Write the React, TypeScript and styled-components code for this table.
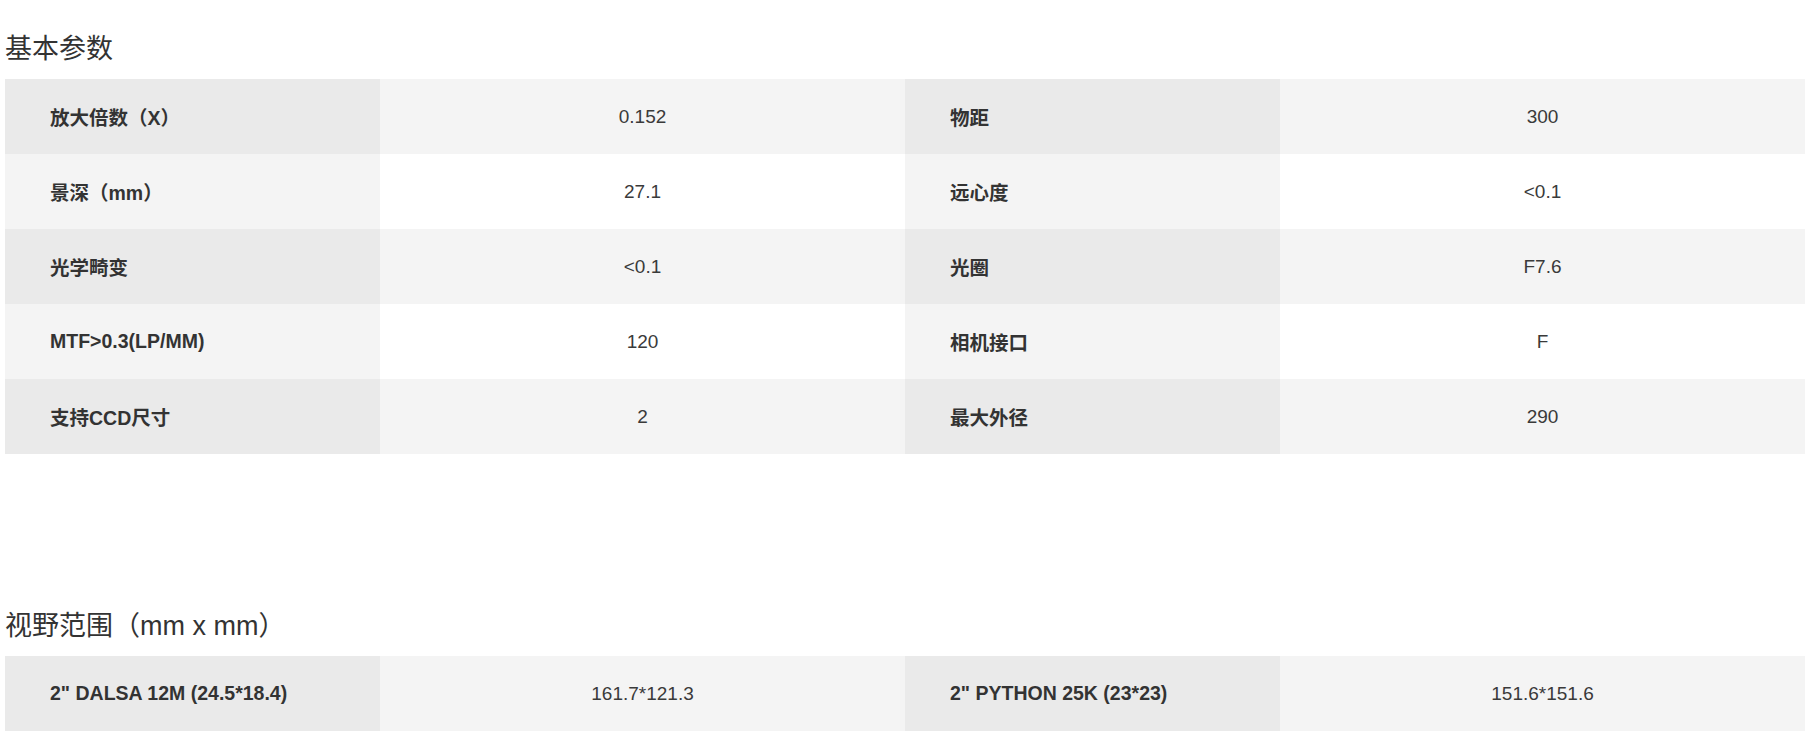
import styled, { createGlobalStyle } from "styled-components";

const GlobalStyle = createGlobalStyle`
  html, body {
    margin: 0;
    padding: 0;
    background: #fff;
  }
  body {
    font-family: "Liberation Sans", Arial, "Noto Sans CJK SC", sans-serif;
    color: #333;
  }
`;

type Spec = [string, string, string, string];

const basicSpecs: Spec[] = [
  ["放大倍数（X）", "0.152", "物距", "300"],
  ["景深（mm）", "27.1", "远心度", "<0.1"],
  ["光学畸变", "<0.1", "光圈", "F7.6"],
  ["MTF>0.3(LP/MM)", "120", "相机接口", "F"],
  ["支持CCD尺寸", "2", "最大外径", "290"],
];

const fovSpecs: Spec[] = [
  ['2" DALSA 12M (24.5*18.4)', "161.7*121.3", '2" PYTHON 25K (23*23)', "151.6*151.6"],
];

function SpecTable({ rows }: { rows: Spec[] }) {
  return (
    <Table>
      {rows.map((row, i) => (
        <Row key={i} $alt={i % 2 === 1}>
          <LabelCell>{row[0]}</LabelCell>
          <ValueCell>{row[1]}</ValueCell>
          <LabelCell>{row[2]}</LabelCell>
          <ValueCell>{row[3]}</ValueCell>
        </Row>
      ))}
    </Table>
  );
}

export default function App() {
  return (
    <>
      <GlobalStyle />
      <Page>
        <Section>
          <Title>基本参数</Title>
          <SpecTable rows={basicSpecs} />
        </Section>
        <Section $gap>
          <Title>视野范围（mm x mm）</Title>
          <SpecTable rows={fovSpecs} />
        </Section>
      </Page>
    </>
  );
}

const Page = styled.div`
  padding: 29px 8px 40px 5px;
  width: 1800px;
`;

const Section = styled.section<{ $gap?: boolean }>`
  margin-top: ${(p) => (p.$gap ? "152px" : "0")};
`;

const Title = styled.h2`
  margin: 0 0 10px;
  height: 40px;
  line-height: 40px;
  font-size: 27px;
  font-weight: normal;
  color: #333;
  font-family: "Liberation Sans", Arial, "Noto Sans CJK SC", sans-serif;
`;

const Table = styled.div`
  display: flex;
  flex-direction: column;
  width: 1800px;
`;

const Row = styled.div<{ $alt: boolean }>`
  display: grid;
  grid-template-columns: 375px 525px 375px 525px;
  height: 75px;
  --label-bg: ${(p) => (p.$alt ? "#f4f4f4" : "#eaeaea")};
  --value-bg: ${(p) => (p.$alt ? "#ffffff" : "#f4f4f4")};
`;

const LabelCell = styled.div`
  display: flex;
  align-items: center;
  padding-left: 45px;
  background: var(--label-bg);
  font-size: 19.5px;
  font-weight: bold;
  color: #333;
  white-space: nowrap;
`;

const ValueCell = styled.div`
  display: flex;
  align-items: center;
  justify-content: center;
  background: var(--value-bg);
  font-size: 19px;
  color: #3a3a3a;
`;
